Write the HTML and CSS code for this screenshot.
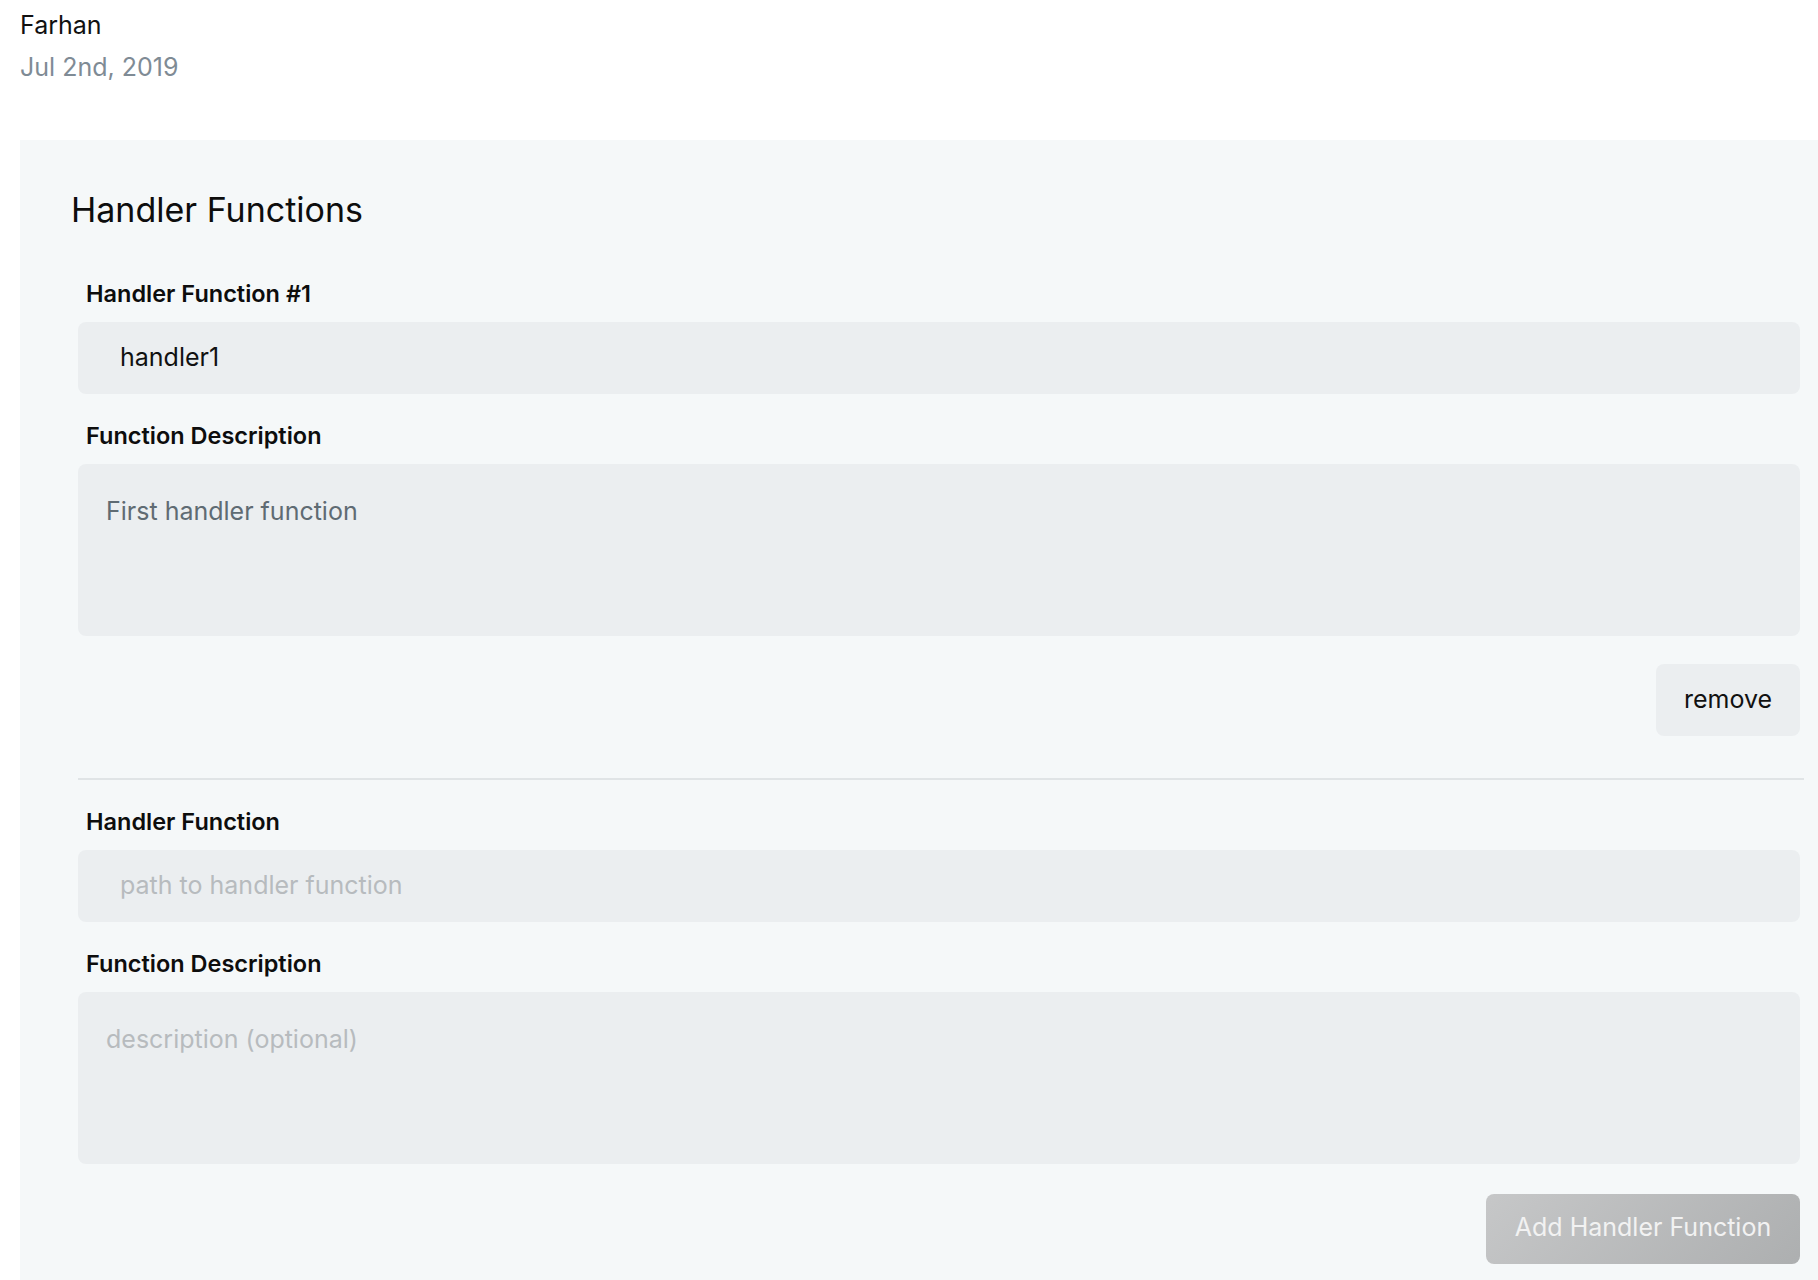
FILE: index.html
```html
<!DOCTYPE html>
<html lang="en">
<head>
<meta charset="utf-8">
<title>Handler Functions</title>
<link rel="stylesheet" href="styles.css">
</head>
<body>
<div class="page">
  <div class="meta">
    <div class="author">Farhan</div>
    <div class="date">Jul 2nd, 2019</div>
  </div>
  <section class="panel">
    <h2 class="panel-title">Handler Functions</h2>
    <div class="fields">
      <div class="handler">
        <label class="field-label">Handler Function #1</label>
        <input class="text-input" type="text" value="handler1">
        <label class="field-label">Function Description</label>
        <textarea class="text-area filled">First handler function</textarea>
        <div class="actions">
          <button class="btn btn-light" type="button">remove</button>
        </div>
      </div>
      <hr class="divider">
      <div class="handler new">
        <label class="field-label">Handler Function</label>
        <input class="text-input" type="text" placeholder="path to handler function">
        <label class="field-label">Function Description</label>
        <textarea class="text-area" placeholder="description (optional)"></textarea>
        <div class="actions">
          <button class="btn btn-disabled" type="button">Add Handler Function</button>
        </div>
      </div>
    </div>
  </section>
</div>
</body>
</html>
```
FILE: styles.css
```css
* { box-sizing: border-box; }
html, body { margin: 0; padding: 0; background: #ffffff; }
body {
  font-family: Inter, "Noto Sans", "Liberation Sans", sans-serif;
  color: #111;
  overflow: hidden;
}
.page { padding-left: 20px; }
.meta { padding-top: 4px; }
.author, .date { font-size: 25px; line-height: 42px; }
.author { color: #111; }
.date { color: #7f8b95; }

.panel {
  margin-top: 52px;
  background: #f5f8f9;
  padding: 48px 18px 40px 0;
  min-height: 1200px;
}
.panel-title {
  margin: 0;
  padding-left: 51px;
  font-size: 34px;
  font-weight: 400;
  line-height: 44px;
  color: #0d0d0d;
}
.fields {
  padding-left: 58px;
  margin-top: 48px;
}
.handler { display: flex; flex-direction: column; }
.field-label {
  display: block;
  padding-left: 8px;
  font-size: 23.5px;
  font-weight: 600;
  line-height: 28px;
  margin-bottom: 14px;
  color: #0d0d0d;
}
.text-input, .text-area {
  display: block;
  width: 100%;
  border: none;
  outline: none;
  background: #ebeef0;
  border-radius: 8px;
  font-family: inherit;
  font-size: 25px;
  margin: 0 0 28px 0;
}
.text-input {
  height: 72px;
  padding: 0 20px 2px 42px;
  color: #111;
}
.text-area {
  height: 172px;
  padding: 32px 26px 0 28px;
  line-height: 30px;
  resize: none;
  color: #5f6b73;
}
.text-input::placeholder, .text-area::placeholder { color: #b7bbbe; opacity: 1; }
.actions { display: flex; justify-content: flex-end; }
.btn {
  border: none;
  border-radius: 8px;
  font-family: inherit;
  font-size: 25px;
  line-height: 30px;
  padding: 0 0 2px 0;
  cursor: pointer;
}
.btn-light {
  height: 72px;
  width: 144px;
  background: #ebeef0;
  color: #111;
}
.handler.new .actions { margin-top: 2px; }
.btn-disabled {
  height: 70px;
  width: 314px;
  padding-bottom: 4px;
  background: linear-gradient(135deg, #c6c7c8 0%, #adafb0 100%);
  color: #f2f2f2;
}
.divider {
  border: none;
  height: 2px;
  background: #e0e4e6;
  margin: 42px -4px 28px 0;
}
```
